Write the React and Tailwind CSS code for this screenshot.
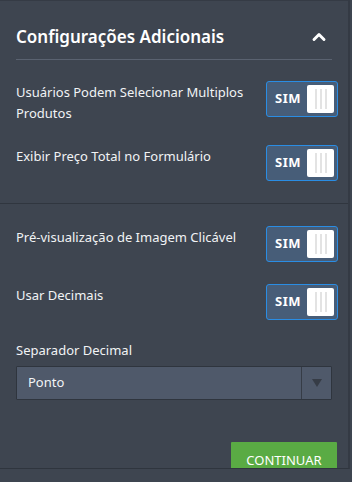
import { ChevronUp } from 'lucide-react';

// ── Toggle "SIM" ──────────────────────────────────────────────────
function Toggle() {
  return (
    <div className="flex items-center w-[72px] h-[36px] shrink-0 rounded-[3px] border border-[#2a8de4] bg-[#475d78] pl-[8px] pr-[3px]">
      <span className="text-[13px] font-bold text-white tracking-[0.5px] flex-1">SIM</span>
      <div className="w-[27px] h-[28px] bg-white rounded-[2px] flex items-center justify-center gap-[3px]">
        <span className="w-[2px] h-[20px] bg-[#e3e3e3]" />
        <span className="w-[2px] h-[20px] bg-[#e3e3e3]" />
        <span className="w-[2px] h-[20px] bg-[#e3e3e3]" />
      </div>
    </div>
  );
}

function Row({ label, className = '' }) {
  return (
    <div className={`flex items-start justify-between pl-[16px] pr-[10px] ${className}`}>
      <p className="text-[13px] leading-[21px] text-[#f1f3f5] max-w-[240px] pt-[1px]">{label}</p>
      <Toggle />
    </div>
  );
}

export default function App() {
  return (
    <div className="w-[352px] h-[482px] bg-[#3e4550] overflow-hidden" style={{ fontFamily: '"Noto Sans", "Open Sans", sans-serif' }}>
      <div className="w-[350px] h-[469px] border-t border-[#353b45] border-r-2 border-r-[#343a44] border-b border-b-[#2f353e] overflow-hidden">
        {/* Header */}
        <div className="mx-[16px] pt-[25px] pb-[11px] border-b border-[#5a6270] flex items-center justify-between">
          <h2 className="text-[17px] font-semibold text-white leading-[22px]">Configurações Adicionais</h2>
          <ChevronUp size={20} strokeWidth={3.5} className="text-white mr-[3px]" />
        </div>

        <Row className="mt-[21px]" label="Usuários Podem Selecionar Multiplos Produtos" />
        <Row className="mt-[21px]" label="Exibir Preço Total no Formulário" />

        <div className="mt-[22px] border-t border-[#30363f]" />

        <Row className="mt-[22px]" label="Pré-visualização de Imagem Clicável" />
        <Row className="mt-[22px]" label="Usar Decimais" />

        {/* Separador */}
        <div className="px-[16px] mt-[20px]">
          <p className="text-[13px] leading-[21px] text-[#f1f3f5]">Separador Decimal</p>
          <div className="mt-[5px] h-[34px] flex bg-[#4f596a] border border-[#2f353e] rounded-[1px]">
            <span className="flex-1 flex items-center pl-[11px] text-[13px] text-[#f2f4f6]">Ponto</span>
            <div className="w-[30px] border-l border-[#363c46] flex items-center justify-center">
              <svg width="12" height="10" viewBox="0 0 12 10"><path d="M1 1h10L6 9z" fill="#363c46" /></svg>
            </div>
          </div>
        </div>

        {/* Footer button */}
        <div className="flex justify-end pr-[11px] mt-[42px]">
          <button className="w-[106px] h-[34px] bg-[#5aab44] text-white text-[13px] leading-[20px] pt-[8px] flex justify-center items-start rounded-[1px]">CONTINUAR</button>
        </div>
      </div>
    </div>
  );
}
